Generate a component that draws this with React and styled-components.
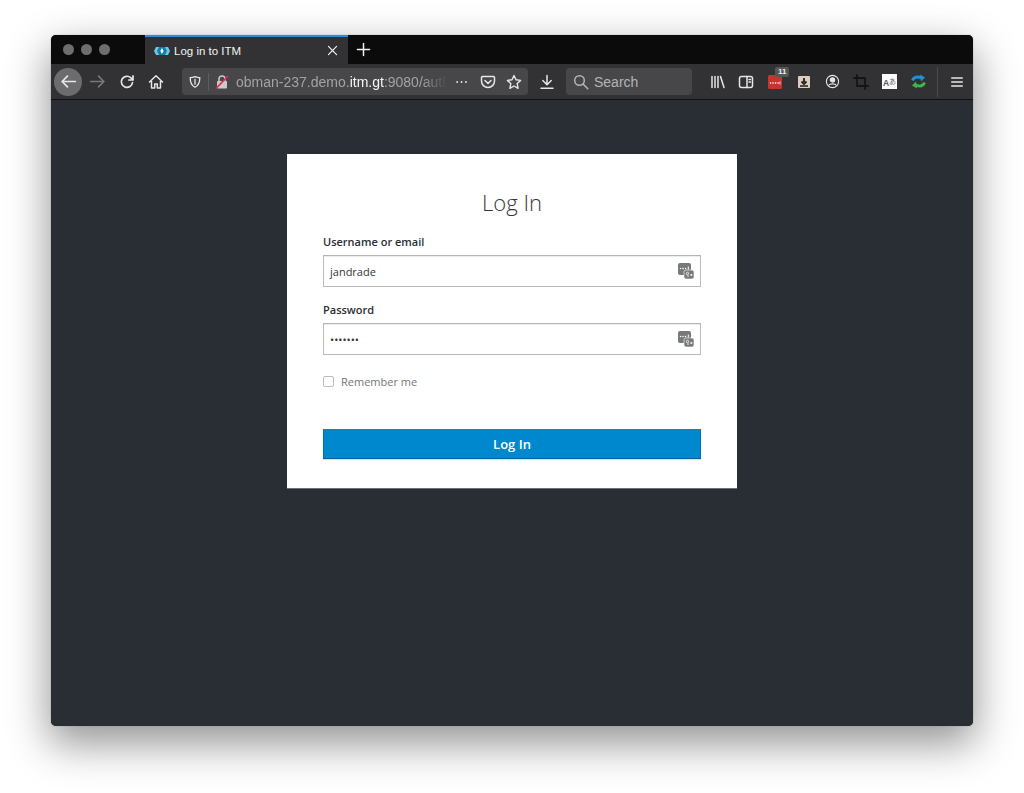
import React from 'react';
import styled, { createGlobalStyle } from 'styled-components';

const GlobalStyle = createGlobalStyle`
  html, body {
    margin: 0;
    padding: 0;
    background: #fff;
    overflow: hidden;
  }
  * { box-sizing: border-box; }
`;

const Page = styled.div`
  width: 1024px;
  height: 793px;
  padding: 35px 51px 67px;
  font-family: 'Open Sans', 'Liberation Sans', sans-serif;
`;

const BrowserWindow = styled.div`
  height: 691px;
  display: flex;
  flex-direction: column;
  border-radius: 5px;
  overflow: hidden;
  background: #292e35;
  box-shadow: 0 16px 42px 2px rgba(0, 0, 0, 0.42), 0 0 1px rgba(0, 0, 0, 0.5);
`;

const TitleBar = styled.div`
  height: 29px;
  flex: none;
  display: flex;
  align-items: stretch;
  background: #0b0b0c;
`;

const Lights = styled.div`
  width: 94px;
  display: flex;
  align-items: center;
  gap: 7px;
  padding-left: 11.5px;
`;

const Light = styled.span`
  width: 11px;
  height: 11px;
  border-radius: 50%;
  background: #6e6e70;
`;

const Tab = styled.div`
  width: 203px;
  display: flex;
  align-items: center;
  padding: 0 9px 0 9px;
  background: #323234;
  border-top: 2px solid #2b8fe0;
  color: #f3f3f3;
  font-family: 'Liberation Sans', sans-serif;
  font-size: 11.5px;
`;

const TabTitle = styled.span`
  flex: 1;
  margin-left: 4px;
`;

const NewTab = styled.div`
  width: 30px;
  display: flex;
  align-items: center;
  justify-content: center;
  color: #f0f0f0;
`;

const Toolbar = styled.div`
  height: 36px;
  flex: none;
  display: flex;
  align-items: center;
  padding-left: 3px;
  background: #323234;
  border-bottom: 1px solid #0f1012;
  color: #e6e6e6;
`;

const BackButton = styled.div`
  width: 28px;
  height: 28px;
  margin-right: 1px;
  border-radius: 50%;
  background: #6c6c6e;
  display: flex;
  align-items: center;
  justify-content: center;
`;

const Slot = styled.div`
  width: ${({ $w }) => $w || 29}px;
  height: 26px;
  flex: none;
  position: relative;
  display: flex;
  align-items: center;
  justify-content: center;
  color: ${({ $dim }) => ($dim ? '#77777a' : 'inherit')};
`;

const UrlBar = styled.div`
  width: 346px;
  height: 27px;
  margin: 0 4px 0 12px;
  flex: none;
  display: flex;
  align-items: center;
  border-radius: 4px;
  background: #474749;
`;

const UrlDivider = styled.span`
  width: 1px;
  height: 18px;
  background: #5e5e60;
`;

const UrlText = styled.div`
  width: 211px;
  flex: none;
  margin-left: 6px;
  overflow: hidden;
  white-space: nowrap;
  font-family: 'Liberation Sans', sans-serif;
  font-size: 14px;
  color: #a3a3a5;
  mask-image: linear-gradient(to right, #000 88%, transparent 100%);
  b {
    font-weight: 400;
    color: #f4f4f4;
  }
`;

const SearchBox = styled.div`
  width: 126px;
  height: 27px;
  margin: 0 12px 0 5px;
  flex: none;
  display: flex;
  align-items: center;
  gap: 5px;
  padding-left: 7px;
  border-radius: 4px;
  background: #474749;
  font-family: 'Liberation Sans', sans-serif;
  font-size: 14px;
  color: #b4b4b6;
`;

const ToolbarDivider = styled.span`
  width: 1px;
  height: 30px;
  margin: 0 4px;
  background: #4a4a4c;
`;

const Badge = styled.span`
  position: absolute;
  top: -2px;
  left: 15px;
  padding: 0 3px;
  height: 10px;
  border-radius: 2px;
  background: #56565a;
  color: #f0f0f0;
  font-family: 'Liberation Sans', sans-serif;
  font-size: 8px;
  font-weight: 700;
  line-height: 10px;
`;

const Content = styled.main`
  flex: 1;
  padding-top: 54px;
  background: #292e35;
`;

const Card = styled.form`
  width: 450px;
  height: 334px;
  margin: 0 auto;
  padding: 0 36px;
  background: #fff;
  box-shadow: 0 1px 0 #6d7076;
`;

const Title = styled.h1`
  margin: 0;
  padding-top: 33px;
  height: 80px;
  text-align: center;
  font-size: 22px;
  font-weight: 300;
  line-height: 30px;
  color: #363636;
`;

const Field = styled.div`
  height: 68px;
`;

const Label = styled.label`
  display: block;
  height: 21px;
  font-size: 11px;
  font-weight: 600;
  line-height: 15px;
  color: #292e34;
`;

const InputBox = styled.div`
  height: 32px;
  display: flex;
  align-items: center;
  justify-content: space-between;
  padding: 0 6px 0 6px;
  border: 1px solid #bbbbbb;
  border-top-color: #b5b5b5;
  box-shadow: inset 0 1px 1px rgba(0, 0, 0, 0.08);
  font-size: 11px;
  color: #363636;
`;

const Remember = styled.div`
  display: flex;
  align-items: center;
  gap: 7px;
  height: 22px;
  margin-bottom: 37px;
  font-size: 11px;
  color: #72767b;
`;

const Checkbox = styled.span`
  width: 11px;
  height: 11px;
  border: 1px solid #bbbbbb;
  border-radius: 2px;
  background: #fff;
`;

const Submit = styled.button`
  display: block;
  width: 100%;
  height: 30px;
  border: 1px solid #0076b7;
  border-top-color: #0a86cc;
  border-bottom-color: #00659c;
  background: #0088ce;
  color: #fff;
  font-family: 'Open Sans', sans-serif;
  font-size: 13px;
  font-weight: 600;
  box-shadow: 0 1px 1px rgba(0, 0, 0, 0.12);
`;

const Svg = ({ size = 16, children, fill = 'none', w = 1.6 }) => (
  <svg width={size} height={size} viewBox="0 0 16 16" fill={fill} stroke={fill === 'none' ? 'currentColor' : 'none'} strokeWidth={w} strokeLinecap="round" strokeLinejoin="round">
    {children}
  </svg>
);

const Favicon = () => (
  <svg width="16" height="10" viewBox="0 0 16 10">
    <path d="M2 1h12l2 4-2 4H2L0 5z" fill="#6fc7e2" />
    <path d="M5 1h6l2 4-2 4H5L3 5z" fill="#0f7fb0" />
    <path d="M8 2l1.6 3L8 8 6.4 5z" fill="#fff" />
  </svg>
);

const LockOff = () => (
  <svg width="16" height="16" viewBox="0 0 16 16">
    <path d="M5 7V5a3 3 0 0 1 6 0v2" fill="none" stroke="#c9c9c9" strokeWidth="1.5" />
    <rect x="3" y="7" width="10" height="7.5" rx="1" fill="#c9c9c9" />
    <path d="M2 14.5L14 2" stroke="#e22850" strokeWidth="1.7" />
  </svg>
);

const KeyIcon = () => (
  <svg width="16" height="17" viewBox="0 0 16 17">
    <rect x="0" y="0" width="13" height="12" rx="2" fill="#77787a" />
    <rect x="6" y="7" width="10" height="9" rx="2" fill="#77787a" stroke="#fff" strokeWidth="0.6" />
    <path d="M2.5 5.5h.1M5 5.5h.1M7.5 5.5h.1" stroke="#fff" strokeWidth="1.5" strokeLinecap="round" />
    <path d="M10.3 3.5v3" stroke="#fff" strokeWidth="1" />
    <circle cx="9.5" cy="10.5" r="1.2" fill="none" stroke="#fff" strokeWidth="0.8" />
    <path d="M9 13h2M12.2 12h2.3M13.3 10.9v2.2" stroke="#fff" strokeWidth="0.8" />
  </svg>
);

const ExtensionRed = () => (
  <svg width="16" height="16" viewBox="0 0 16 16">
    <rect x="1" y="1" width="14" height="14" rx="1.5" fill="#c8332f" />
    <path d="M3.5 9h.1M6 9h.1M8.5 9h.1M11 9h.1" stroke="#fff" strokeWidth="1.6" strokeLinecap="round" />
    <path d="M13 7.5v3" stroke="#fff" strokeWidth="0.8" />
  </svg>
);

const ExtensionBox = () => (
  <svg width="14" height="14" viewBox="0 0 14 14">
    <rect x="1" y="1" width="12" height="12" rx="1" fill="#dccdbf" />
    <path d="M7 3v4M4.5 6.5L7 9l2.5-2.5" stroke="#1f1f1f" strokeWidth="1.8" fill="none" />
    <path d="M3 11h8" stroke="#1f1f1f" strokeWidth="1.6" />
  </svg>
);

const ExtensionTranslate = () => (
  <svg width="15" height="15" viewBox="0 0 15 15">
    <rect width="15" height="15" fill="#fbfbfb" />
    <text x="1" y="11.5" fontSize="8.5" fontFamily="Liberation Sans" fontWeight="700" fill="#5a5a5a">A</text>
    <text x="7" y="10" fontSize="7" fontFamily="Noto Sans CJK SC" fill="#666">あ</text>
  </svg>
);

const ExtensionSync = () => (
  <svg width="15" height="15" viewBox="0 0 15 15" fill="none" strokeWidth="3">
    <path d="M1.5 6.5C2.5 3.2 6.5 2 10.5 4" stroke="#1b93d6" />
    <path d="M9 0.5l5 3-4 4z" fill="#1b93d6" />
    <path d="M13.5 8.5C12.5 11.8 8.5 13 4.5 11" stroke="#3fb54a" />
    <path d="M6 14.5l-5-3 4-4z" fill="#3fb54a" />
  </svg>
);

const App = () => (
  <Page>
    <GlobalStyle />
    <BrowserWindow>
      <TitleBar>
        <Lights>
          <Light />
          <Light />
          <Light />
        </Lights>
        <Tab>
          <Favicon />
          <TabTitle>Log in to ITM</TabTitle>
          <Svg size={13} w={1.5}><path d="M3 3l10 10M13 3L3 13" /></Svg>
        </Tab>
        <NewTab>
          <Svg size={15} w={1.6}><path d="M8 1.5v13M1.5 8h13" /></Svg>
        </NewTab>
      </TitleBar>

      <Toolbar>
        <BackButton>
          <Svg size={17} w={1.6}><path d="M14.5 8H2M7 3L2 8l5 5" /></Svg>
        </BackButton>
        <Slot $dim><Svg size={17} w={1.5}><path d="M1.5 8H14M9 3l5 5-5 5" /></Svg></Slot>
        <Slot><Svg w={1.7}><path d="M13.5 8.5A5.6 5.6 0 1 1 11.7 3.7L14 6M14 1.8V6H9.8" /></Svg></Slot>
        <Slot><Svg w={1.5}><path d="M1.5 8L8 1.8 14.5 8M3.5 7v7h3.2v-4h2.6v4h3.2V7" /></Svg></Slot>

        <UrlBar>
          <Slot $w={26}><Svg size={14} w={1.5}><path d="M8 1.8c2 .9 3.9 1.2 5.5 1.2 0 5-1.5 9-5.5 11-4-2-5.5-6-5.5-11 1.6 0 3.5-.3 5.5-1.2zM8 5v5.5" /></Svg></Slot>
          <UrlDivider />
          <Slot $w={25}><LockOff /></Slot>
          <UrlText style={{ marginLeft: 2 }}>obman-237.demo.<b>itm.gt</b>:9080/auth/realms</UrlText>
          <Slot $w={30}><Svg size={14} w={2.1}><path d="M2.5 8h.01M7.5 8h.01M12.5 8h.01" /></Svg></Slot>
          <Slot $w={22}><Svg w={1.5}><path d="M2.5 2.5h11a1 1 0 0 1 1 1V7a6.500 6.500 0 0 1-13 0V3.500a1 1 0 0 1 1-1zM5 6.500l3 3 3-3" /></Svg></Slot>
          <Slot $w={29}><Svg w={1.4}><path d="M8 1.500l2 4.300 4.600.6-3.400 3.200.9 4.700L8 12l-4.100 2.300.9-4.700L1.400 6.400 6 5.800z" /></Svg></Slot>
        </UrlBar>

        <Slot $w={29}><Svg w={1.5}><path d="M8 1.500v9M3.800 6.500L8 10.700l4.200-4.200M2 14.200h12" /></Svg></Slot>

        <SearchBox>
          <Svg size={16} w={1.5}><circle cx="6.500" cy="6.500" r="4.800" /><path d="M10 10l4.800 4.800" /></Svg>
          Search
        </SearchBox>

        <Slot $w={28} style={{ marginLeft: 0 }}><Svg w={1.5}><path d="M2 2.500v11M5 2.500v11M8 2.500v11M10.500 2.500l3.500 11" /></Svg></Slot>
        <Slot $w={28}><Svg w={1.5}><rect x="1.500" y="2.500" width="13" height="11" rx="2" /><path d="M9 2.500v11M11 5.500h1.500M11 8h1.500" /></Svg></Slot>
        <Slot $w={29}><ExtensionRed /><Badge>11</Badge></Slot>
        <Slot $w={29}><ExtensionBox /></Slot>
        <Slot $w={29}><Svg size={15} w={1.2}><circle cx="8" cy="8" r="6.500" /><circle cx="8" cy="6.300" r="2.300" fill="currentColor" /><path d="M4 12c1-2 7-2 8 0" /></Svg></Slot>
        <Slot $w={28} style={{ color: '#141414' }}><Svg w={1.8}><path d="M4 1v11h11M1 4h11v11" /></Svg></Slot>
        <Slot $w={29}><ExtensionTranslate /></Slot>
        <Slot $w={29}><ExtensionSync /></Slot>
        <ToolbarDivider />
        <Slot $w={29} style={{ marginLeft: 0 }}><Svg size={14} w={1.7}><path d="M2 3.500h12M2 8h12M2 12.500h12" /></Svg></Slot>
      </Toolbar>

      <Content>
        <Card onSubmit={(e) => e.preventDefault()}>
          <Title>Log In</Title>
          <Field>
            <Label>Username or email</Label>
            <InputBox>jandrade<KeyIcon /></InputBox>
          </Field>
          <Field>
            <Label>Password</Label>
            <InputBox>•••••••<KeyIcon /></InputBox>
          </Field>
          <Remember>
            <Checkbox />
            Remember me
          </Remember>
          <Submit type="submit">Log In</Submit>
        </Card>
      </Content>
    </BrowserWindow>
  </Page>
);

export default App;
